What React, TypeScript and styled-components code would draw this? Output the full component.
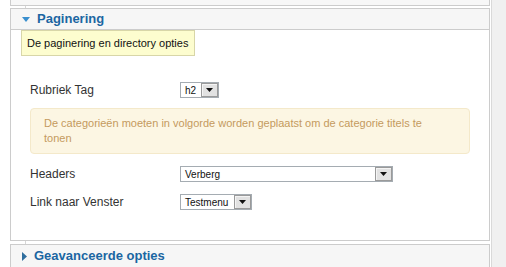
import React from "react";
import styled, { createGlobalStyle } from "styled-components";

const Global = createGlobalStyle`
  html, body { margin: 0; padding: 0; background: #ffffff; }
  body { font-family: "Liberation Sans", Arial, sans-serif; overflow: hidden; }
  * { box-sizing: border-box; }
`;

const Page = styled.div`
  display: flex;
  width: 506px;
  height: 267px;
  overflow: hidden;
`;

const Main = styled.div`
  width: 490px;
  padding-left: 10px;
  display: flex;
  flex-direction: column;
`;

const Strip = styled.div`
  flex: 1;
  margin-left: 1px;
  border-left: 1px solid #d9d9d9;
  background: #f0f0f0;
`;

const PrevPanel = styled.div`
  height: 6px;
  border: 1px solid #cccccc;
  border-top: none;
  background: #f7f7f7;
`;

const Gap = styled.div`
  height: 3px;
  margin-left: 15px;
  border-left: 1px solid #d6d6d6;
`;

const Panel = styled.div<{ $open?: boolean }>`
  width: 480px;
  border: 1px solid #cccccc;
  ${(p) => (p.$open ? "" : "border-bottom: none;")}
  background: #ffffff;
`;

const Header = styled.div<{ $open?: boolean }>`
  height: ${(p) => (p.$open ? "21px" : "22px")};
  display: flex;
  align-items: center;
  gap: 7px;
  padding-left: 11px;
  background: #f6f6f6;
  ${(p) => (p.$open ? "border-bottom: 1px solid #cccccc;" : "")}
`;

const Title = styled.span`
  font-size: 13px;
  font-weight: bold;
  color: #1b66a2;
  line-height: 20px;
`;

const Body = styled.div`
  height: 210px;
  display: flex;
  flex-direction: column;
`;

const Tip = styled.div`
  align-self: flex-start;
  margin-left: 10px;
  height: 26px;
  padding: 0 6px 0 5px;
  border: 1px solid #d8d6a8;
  background: #fdfdcf;
  font-size: 11px;
  line-height: 24px;
  color: #111;
`;

const Form = styled.div`
  padding: 26px 20px 0 19px;
  display: flex;
  flex-direction: column;
`;

const Row = styled.div<{ $mt?: number }>`
  display: grid;
  grid-template-columns: 150px auto;
  align-items: center;
  margin-top: ${(p) => p.$mt ?? 0}px;
  height: 16px;
`;

const Label = styled.span`
  font-size: 12px;
  color: #333;
`;

const SelectBox = styled.div<{ $w: number }>`
  width: ${(p) => p.$w}px;
  height: 16px;
  border: 1px solid #a5acb2;
  background: #fff;
  display: flex;
  align-items: center;
  justify-content: space-between;
  padding: 0 0 0 4px;
  font-size: 10px;
  color: #111;
`;

const ArrowBtn = styled.div`
  width: 17px;
  height: 14px;
  border: 1px solid #9a9a9a;
  background: #e2e2e2;
  box-shadow: inset 1px 1px 0 #f4f4f4;
  display: flex;
  align-items: center;
  justify-content: center;
`;

const Notice = styled.div`
  margin-top: 10px;
  width: 440px;
  height: 46px;
  border: 1px solid #f4e9ca;
  border-radius: 4px;
  background: #fcf6e3;
  padding: 7px 40px 0 13px;
  font-size: 11px;
  line-height: 15px;
  color: #c49a5e;
`;

const Select = ({ w, value }: { w: number; value: string }) => (
  <SelectBox $w={w}>
    <span>{value}</span>
    <ArrowBtn>
      <svg width="7" height="4" viewBox="0 0 7 4">
        <polygon points="0,0 7,0 3.5,4" fill="#111" />
      </svg>
    </ArrowBtn>
  </SelectBox>
);

export default function App() {
  return (
    <Page>
      <Global />
      <Main>
        <PrevPanel />
        <Gap />
        <Panel $open>
          <Header $open>
            <svg width="8" height="5" viewBox="0 0 8 5">
              <polygon points="0,0 8,0 4,5" fill="#3a8fce" />
            </svg>
            <Title>Paginering</Title>
          </Header>
          <Body>
            <Tip>De paginering en directory opties</Tip>
            <Form>
              <Row>
                <Label>Rubriek Tag</Label>
                <Select w={39} value="h2" />
              </Row>
              <Notice>
                De categorieën moeten in volgorde worden geplaatst om de categorie titels te tonen
              </Notice>
              <Row $mt={12}>
                <Label>Headers</Label>
                <Select w={213} value="Verberg" />
              </Row>
              <Row $mt={12}>
                <Label>Link naar Venster</Label>
                <Select w={72} value="Testmenu" />
              </Row>
            </Form>
          </Body>
        </Panel>
        <Gap />
        <Panel>
          <Header>
            <svg width="5" height="9" viewBox="0 0 5 9">
              <polygon points="0,0 5,4.5 0,9" fill="#2f6e9e" />
            </svg>
            <Title>Geavanceerde opties</Title>
          </Header>
        </Panel>
      </Main>
      <Strip />
    </Page>
  );
}
